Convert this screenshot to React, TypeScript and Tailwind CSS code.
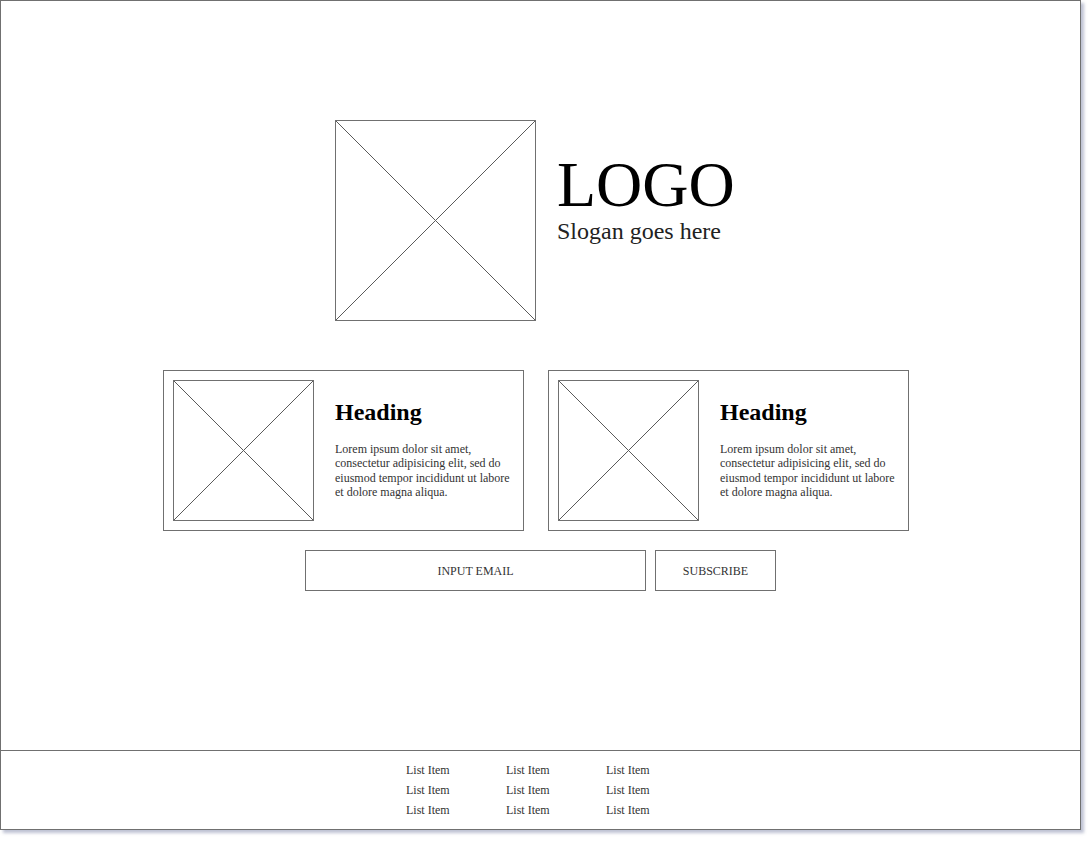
import React from 'react';

const Placeholder: React.FC<{ className: string }> = ({ className }) => (
  <div className={`relative border border-[#707070] bg-white ${className}`}>
    <svg className="absolute inset-0 h-full w-full" viewBox="0 0 100 100" preserveAspectRatio="none">
      <line x1="0" y1="0" x2="100" y2="100" stroke="#5a5a5a" strokeWidth="1" vectorEffect="non-scaling-stroke" />
      <line x1="100" y1="0" x2="0" y2="100" stroke="#5a5a5a" strokeWidth="1" vectorEffect="non-scaling-stroke" />
    </svg>
  </div>
);

const Card: React.FC = () => (
  <div className="flex w-[361px] h-[161px] border border-[#707070] p-[9px] bg-white">
    <Placeholder className="w-[141px] h-[141px] shrink-0" />
    <div className="ml-[21px] pt-[20px] w-[177px]">
      <h2 className="text-[24px] leading-none font-bold text-black">Heading</h2>
      <p className="mt-[18px] text-[12px] leading-[14.4px] text-[#333]">
        Lorem ipsum dolor sit amet, consectetur adipisicing elit, sed do eiusmod tempor incididunt ut labore et dolore magna aliqua.
      </p>
    </div>
  </div>
);

const columns = [0, 1, 2];
const rows = [0, 1, 2];

export default function App() {
  return (
    <div className="min-h-screen bg-white" style={{ fontFamily: '"Liberation Serif", "Times New Roman", serif' }}>
      <div className="flex flex-col w-[1081px] h-[830px] border border-[#707070] shadow-[3px_3px_3px_rgba(70,80,130,0.35)] bg-white">
        <main className="flex-1 pt-[119px]">
          <div className="flex pl-[334px]">
            <Placeholder className="w-[201px] h-[201px]" />
            <div className="ml-[21px] mt-[33px]">
              <div className="text-[64px] leading-none text-black">LOGO</div>
              <div className="mt-[2px] text-[24px] leading-none text-[#222]">Slogan goes here</div>
            </div>
          </div>

          <div className="flex gap-[24px] pl-[162px] mt-[49px]">
            <Card />
            <Card />
          </div>

          <div className="flex gap-[9px] pl-[304px] mt-[19px]">
            <div className="flex items-center justify-center w-[341px] h-[41px] border border-[#707070] text-[12px] text-[#333] uppercase">
              Input email
            </div>
            <button className="flex items-center justify-center w-[121px] h-[41px] border border-[#707070] text-[12px] text-[#333] uppercase bg-white">
              Subscribe
            </button>
          </div>
        </main>

        <footer className="h-[79px] border-t border-[#707070] pt-[9px] pl-[405px]">
          <div className="flex">
            {columns.map((c) => (
              <ul key={c} className="w-[100px]">
                {rows.map((r) => (
                  <li key={r} className="h-[20px] leading-[20px] text-[12px] text-[#333]">
                    List Item
                  </li>
                ))}
              </ul>
            ))}
          </div>
        </footer>
      </div>
    </div>
  );
}
